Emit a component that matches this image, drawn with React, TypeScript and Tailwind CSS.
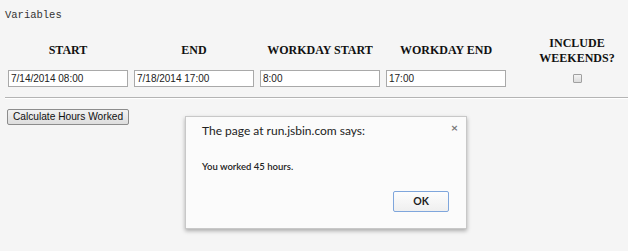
import React from "react";

export default function App() {
  const headers = ["START", "END", "WORKDAY START", "WORKDAY END"];
  const values = ["7/14/2014 08:00", "7/18/2014 17:00", "8:00", "17:00"];
  return (
    <div className="w-[628px] h-[251px] bg-[#f5f5f5] relative overflow-hidden">
      <div className="pl-[5px] pt-[9px] text-[10.5px] leading-[12px] text-[#333] [font-family:'Liberation_Mono',monospace]">
        Variables
      </div>
      <div className="grid grid-cols-[126px_126px_126px_126px_136px] pl-[5px] mt-[14px] [font-family:'Liberation_Serif',serif]">
        {headers.map((h) => (
          <div key={h} className="h-[31px] flex items-center justify-center text-[12px] leading-[15px] font-bold text-[#111]">
            {h}
          </div>
        ))}
        <div className="h-[31px] flex flex-col items-center justify-center text-[12px] leading-[15px] font-bold text-[#111] text-center">
          <span>INCLUDE</span>
          <span>WEEKENDS?</span>
        </div>
        {values.map((v) => (
          <div key={v} className="pt-[4px] px-[3px]">
            <div className="w-[120px] h-[17px] bg-white border border-[#a9a9a9] flex items-center pl-[2px] text-[10px] text-[#222] [font-family:'Liberation_Sans',Arial,sans-serif]">
              {v}
            </div>
          </div>
        ))}
        <div className="pt-[8px] flex justify-center">
          <div className="w-[9px] h-[9px] border border-[#a0a0a0] rounded-[1px] bg-gradient-to-b from-[#f4f4f4] to-[#dcdcdc]" />
        </div>
      </div>
      <div className="mt-[10px] ml-[5px] h-[2px] border-t border-t-[#b4b4b4] border-b border-b-white" />
      <div className="mt-[10px] ml-[7px] flex">
        <div className="flex items-center justify-center w-[122px] h-[16px] border border-[#8c8c8c] rounded-[2px] bg-gradient-to-b from-[#f2f2f2] to-[#dddddd] text-[10.2px] text-[#111] [font-family:'Liberation_Sans',Arial,sans-serif]">
          Calculate Hours Worked
        </div>
      </div>

      <div className="absolute left-[185px] top-[116px] w-[282px] h-[113px] bg-[#fbfbfb] border border-[#c8c8c8] shadow-[0_2px_4px_rgba(0,0,0,0.3)] [font-family:'Lato',sans-serif]">
        <div className="absolute right-[8px] top-[5px] text-[12px] leading-[12px] text-[#777] font-bold">×</div>
        <div className="pl-[16px] pt-[6px] text-[12px] leading-[16px] text-[#222]">
          The page at run.jsbin.com says:
        </div>
        <div className="pl-[16px] mt-[21px] text-[9.5px] leading-[14px] text-[#222] font-semibold">
          You worked 45 hours.
        </div>
        <div className="flex justify-end pr-[17px] mt-[17px]">
          <div className="w-[56px] h-[21px] flex items-center justify-center border border-[#7fa6dc] rounded-[2px] bg-gradient-to-b from-[#fdfdfd] to-[#efefef] text-[10.5px] font-bold text-[#222]">
            OK
          </div>
        </div>
      </div>
    </div>
  );
}
